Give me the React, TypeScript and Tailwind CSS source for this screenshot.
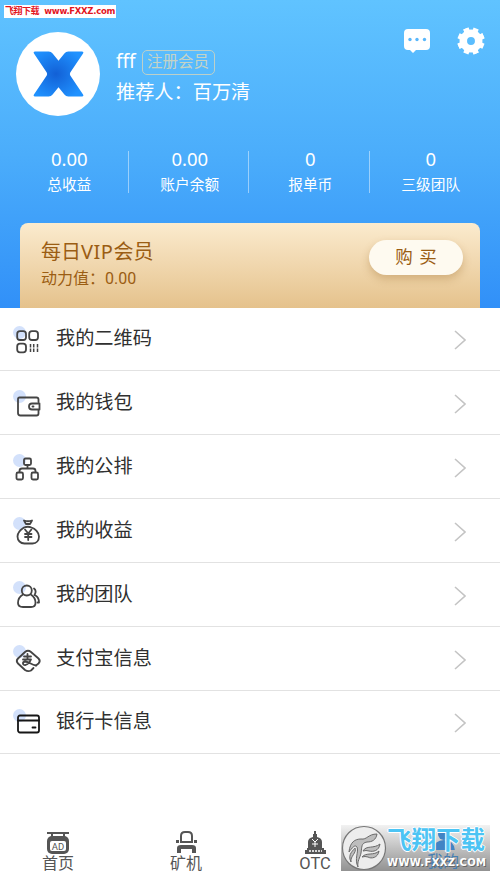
import React from 'react';

const Spot = () => <circle cx="7.500" cy="6.500" r="6.500" fill="#d3e1fb" />;

const icons: Record<string, React.ReactNode> = {
    qr: (
        <>
            <rect x="5.2" y="5.2" width="8.8" height="8.8" rx="2.8" />
            <rect x="17.2" y="5.2" width="8.8" height="8.8" rx="2.8" />
            <rect x="5.2" y="17.6" width="8.8" height="8.8" rx="2.8" />
            <path d="M18.500 18v9M21.700 18v9M25.500 18v9" strokeWidth="1.500" strokeLinecap="butt" strokeDasharray="3.500 1" />
        </>
    ),
    wallet: (
        <>
            <path d="M26.500 12V9.500Q26.500 7.500 24.500 7.500H7.500Q6 7.500 6 9V23Q6 25.500 8.500 25.500H24.500Q26.500 25.500 26.500 23.500V20.500" />
            <path d="M27.500 13.500H20a3 3 0 0 0 0 6H27.500Z" />
            <path d="M20.500 16.500h1" />
        </>
    ),
    tree: (
        <>
            <rect x="12" y="4.500" width="7" height="6.500" rx="1.500" />
            <rect x="4.500" y="18.500" width="6.500" height="7" rx="1.500" />
            <rect x="19.500" y="18.500" width="6.500" height="7" rx="1.500" />
            <path d="M15.500 11.500v3M7.500 18v-1q0-2.500 2.500-2.500h11q2.500 0 2.500 2.500v1" />
        </>
    ),
    bag: (
        <>
            <path d="M12 3.500q4 1.500 8 0l-2 3.500h-4Z" />
            <path d="M12 10.500C8 13 5.500 16 5.500 19.500c0 4 3 7 7 7h8c4 0 6.500-3 6.500-7 0-4-4-8-7.500-9q-3.500-1.500-7.500 0Z" />
            <path d="m13 12.500 3.200 4 3.200-4M16.200 16.500v6.500M13 17h6.500M13 20h6.500" />
        </>
    ),
    team: (
        <>
            <circle cx="14.800" cy="9.500" r="5" />
            <path d="M11 13.500C7.500 15.500 6 18.500 6 22 6 25 8 26 11 26h8c3 0 4.500-1.500 4.500-4C23.500 18 22 15.500 18.800 13.500" />
            <path d="M22 7.500q3 2.500 .5 6.500M23.500 14.500q3.500 2 3.500 7h-1.500" />
        </>
    ),
    alipay: (
        <>
            <path d="M24 20.500 26.500 18.500q2.500-2.500 0-5L19 7q-3-2.500-6 0L6 13.500q-2.500 2.500 0 5l7 6.500q3 2 6 .5l2.500-2.500" />
            <path d="M12 11.500h7M15.500 9v5.500M11 14.500h8q-2 4.500-5.500 5.500c-3 .5-3.500-3-.5-3.500 3.500 0 6 3 11 4" />
        </>
    ),
    card: (
        <g stroke="#161616">
            <rect x="6" y="6.500" width="21" height="17" rx="2" />
            <path d="M6 11.500h21M20.500 18.500h3" />
        </g>
    ),
};

const menu = [
    { icon: 'qr', label: '我的二维码' },
    { icon: 'wallet', label: '我的钱包' },
    { icon: 'tree', label: '我的公排' },
    { icon: 'bag', label: '我的收益' },
    { icon: 'team', label: '我的团队' },
    { icon: 'alipay', label: '支付宝信息' },
    { icon: 'card', label: '银行卡信息' },
];

const stats = [
    { value: '0.00', label: '总收益' },
    { value: '0.00', label: '账户余额' },
    { value: '0', label: '报单币' },
    { value: '0', label: '三级团队' },
];

const Header: React.FC = () => (
    <header className="relative h-[307.500px] bg-linear-to-b from-[#60c3ff] via-[#4badfb] to-[#3190f8] text-white">
        <div className="absolute left-1 top-[5px] flex h-[13px] w-28 items-center justify-between whitespace-nowrap bg-white px-px text-[9px] font-bold leading-none text-[#e3151f]">
            <span className="tracking-[-0.5px]">飞翔下载</span>
            <span className="font-['DejaVu_Sans',sans-serif] text-[8.500px] tracking-[-0.3px]">www.FXXZ.com</span>
        </div>

        <div className="flex h-[148px] items-start pl-4 pt-8">
            <div className="flex size-[84px] items-center justify-center rounded-full bg-white">
                <svg width="53" height="48" viewBox="0 0 54 48">
                    <defs>
                        <radialGradient id="arm" cx=".45" cy=".5" r=".6">
                            <stop offset="0" stopColor="#1260d6" />
                            <stop offset="1" stopColor="#2092ff" />
                        </radialGradient>
                    </defs>
                    <path d="M3 1H17Q19.500 1 21 3L27 10.500 33 3Q34.500 1 37 1H51Q53 1 52 3L39 22.500Q38.200 24 39 25.500L52 45Q53 47 51 47H37Q34.500 47 33 45L27 37.500 21 45Q19.500 47 17 47H3Q1 47 2 45L15 25.500Q15.800 24 15 22.500L2 3Q1 1 3 1Z" fill="url(#arm)" />
                </svg>
            </div>
            <div className="ml-4 pt-4">
                <div className="flex h-[29px] items-center gap-[6px]">
                    <span className="-mt-[3px] font-['Noto_Sans',sans-serif] text-[19px]">fff</span>
                    <span className="flex h-[25px] w-[73px] items-center justify-center rounded-[5px] border border-[#bdd0c8] text-[15.500px] text-[#c5d3c5]">注册会员</span>
                </div>
                <div className="text-[19.200px] leading-[32px]">推荐人：百万清</div>
            </div>
            <div className="ml-auto flex gap-[26px] pr-[15px]">
                <svg className="-mt-[5px]" width="28" height="28" viewBox="0 0 28 28">
                    <path d="M5 2H23Q27 2 27 6V19Q27 23 23 23H13L10 26 7 23H5Q1 23 1 19V6Q1 2 5 2Z" fill="#fff" />
                    <g fill="#59b7fb">
                        <circle cx="7" cy="12.500" r="1.700" />
                        <circle cx="14" cy="12.500" r="1.700" />
                        <circle cx="21.500" cy="12.500" r="1.700" />
                    </g>
                </svg>
                <svg className="-mt-[5px]" width="28" height="28" viewBox="0 0 28 28">
                    <circle cx="14" cy="14" r="7.700" fill="none" stroke="#fff" strokeWidth="7.500" />
                    <g stroke="#fff" strokeWidth="5.500" fill="none">
                        <path d="M14 .5v4M14 23.500v4M.5 14h4M23.500 14h4" transform="rotate(22.500 14 14)" />
                        <path d="M14 .5v4M14 23.500v4M.5 14h4M23.500 14h4" transform="rotate(67.500 14 14)" />
                        <path d="M14 .5v4M14 23.500v4M.5 14h4M23.500 14h4" transform="rotate(-22.500 14 14)" />
                    </g>
                </svg>
            </div>
        </div>

        <div className="flex h-[75px] px-[9px]">
            {stats.map((s, i) => (
                <div key={s.label} className="relative flex-1 text-center">
                    <div className="font-['Noto_Sans',sans-serif] text-[18.500px] leading-[22px]">{s.value}</div>
                    <div className="mt-[4px] text-[14.700px] leading-[22px]">{s.label}</div>
                    {i < 3 && <div className="absolute right-px top-[3px] h-[42px] w-px bg-white/45" />}
                </div>
            ))}
        </div>

        <div className="mx-5 flex h-[84.500px] justify-between rounded-t-lg bg-linear-to-b from-[#fbebce] to-[#e5c28c] pl-[21px] pr-[17px] text-[#9b5d13]">
            <div className="pt-[15px]">
                <div className="text-[20px] leading-[28px]">每日<span className="font-['Noto_Sans',sans-serif] tracking-[0.5px]">VIP</span>会员</div>
                <div className="text-[16px] leading-[25px]">动力值：0.00</div>
            </div>
            <button className="mt-[17px] h-[35px] w-[94px] rounded-full bg-[#fefaf0] text-[17.500px] shadow-[0_4px_8px_rgba(145,95,30,0.3)] [word-spacing:2px]">购 买</button>
        </div>
    </header>
);

const Watermark = () => (
    <div className="absolute left-[341px] top-[825px] flex h-[46px] w-[149px] bg-linear-to-b from-[#f2f2f2] to-[#929292]">
        <svg width="46" height="46" viewBox="0 0 46 46">
            <circle cx="23" cy="23" r="21.500" fill="#ededed" stroke="#777" strokeWidth="1.200" />
            <g fill="#bdbdbd" stroke="#6a6a6a" strokeWidth="1">
                <path d="M17 42C13 34 18 27 16 22 14 19 11 23 8 27 9 17 14 14 20 14 26 15 27 9 36 9 35 15 31 17 26 17 20 18 21 22 20 28 19 33 16 36 17 42Z" />
                <path d="M22 26C25 20 33 24 39 19 38 26 32 27 28 26Q25 25 22 26ZM21 32C25 27 33 31 38 26 37 33 30 34 27 32Q24 31 21 32Z" />
                <path d="M10 37C6 29 13 25 14 23 16 28 9 31 10 37Z" />
            </g>
        </svg>
        <div className="relative flex-1 whitespace-nowrap">
            <svg className="absolute left-[43px] top-[-3px]" width="28" height="28" viewBox="0 0 28 28" fill="#4284c4">
                <circle cx="14" cy="12" r="6" />
                <path d="M3 31q0-13 11-13t11 13Z" />
            </svg>
            <div className="absolute left-[40px] top-[29px] text-[16px] leading-4 text-[#477fb3]">我的</div>
            <div className="relative pt-[3px] text-[24.500px] font-bold leading-[26px] text-[#4cc4f4] [text-shadow:1px_0_white,-1px_0_white,0_1px_white,0_-1px_white]">飞翔下载</div>
            <div className="relative font-['DejaVu_Sans',sans-serif] text-[10px] font-bold leading-[18px] tracking-[0.35px] text-white [text-shadow:1px_1px_#666]">WWW.FXXZ.COM</div>
        </div>
    </div>
);

export default function App() {
    return (
        <div className="relative h-[882px] w-[500px] overflow-hidden bg-white font-[Roboto,'Noto_Sans_CJK_SC',sans-serif]">
            <Header />

            <main>
                {menu.map((item) => (
                    <div key={item.label} className="flex h-[63.850px] items-center border-b border-[#e2e2e2] pl-3 pr-[34px] text-[#303030]">
                        <svg className="mt-1 overflow-visible" width="30" height="30" viewBox="0 0 30 30" fill="none" stroke="#444" strokeWidth="1.800" strokeLinecap="round" strokeLinejoin="round">
                            <g stroke="none"><Spot /></g>
                            {icons[item.icon]}
                        </svg>
                        <span className="ml-[14px] mt-px text-[19.200px] leading-7">{item.label}</span>
                        <svg className="ml-auto mt-[3px]" width="12" height="20" viewBox="0 0 12 20" fill="none" stroke="#c4c4c4" strokeWidth="1.600">
                            <path d="m1 1 10 9L1 19" />
                        </svg>
                    </div>
                ))}
            </main>

            <nav className="mt-[76px] flex text-[16px] leading-5 text-[#555]">
                <div className="flex w-[116px] flex-col items-center">
                    <svg width="24" height="24" viewBox="0 0 24 24" fill="#555">
                        <path d="M1 2h22v2H1ZM5 3h2v4H5ZM17 3h2v4h-2Z" />
                        <rect x="1" y="6" width="22" height="18" rx="5" />
                        <rect x="4" y="11" width="16" height="10" rx="2" fill="#fff" />
                        <text x="12" y="19.500" textAnchor="middle" fontSize="9.500">AD</text>
                    </svg>
                    <span>首页</span>
                </div>
                <div className="flex w-[140px] flex-col items-center">
                    <svg width="24" height="24" viewBox="0 0 24 24" fill="#555">
                        <path d="M7 12V6q0-4 4-4h3q4 0 4 4v6" fill="none" stroke="#555" strokeWidth="2" />
                        <path d="M6 11h13v2H6ZM2 10h3v3H2ZM20 10h3v3h-3ZM3 23v-5q0-3 4-3h11q4 0 4 3v5h-4v-4H7v4Z" />
                    </svg>
                    <span>矿机</span>
                </div>
                <div className="flex w-[118px] flex-col items-center">
                    <svg width="24" height="24" viewBox="0 0 24 24" fill="#555">
                        <path d="M11 1h2v3h1v3q5 1 5 5v6h2v2h2v4H2v-4h2v-2h1v-6q0-4 5-5V4h1Z" />
                        <path d="m9 9 3 3 3-3M12 12v5M9 14h6" fill="none" stroke="#fff" strokeWidth="1" />
                        <path d="M6 21h13" fill="none" stroke="#fff" strokeWidth="1.500" strokeDasharray="2 1" />
                    </svg>
                    <span className="text-[16.500px]">OTC</span>
                </div>
            </nav>

            <Watermark />
        </div>
    );
}
